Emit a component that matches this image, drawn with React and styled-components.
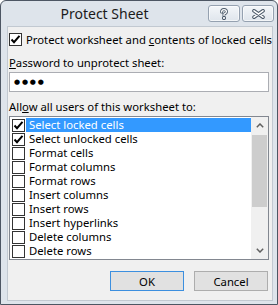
import React from 'react';
import styled, { createGlobalStyle } from 'styled-components';

const uiFont = '"Noto Sans", "Open Sans", sans-serif';

const GlobalStyle = createGlobalStyle`
  html, body {
    margin: 0;
    padding: 0;
    background: #ffffff;
  }
  * {
    box-sizing: border-box;
  }
`;

const Window = styled.div`
  width: 278px;
  height: 305px;
  display: flex;
  flex-direction: column;
  border: 1px solid #4d5663;
  border-radius: 6px 6px 0 0;
  background: #dee4eb;
  font-family: ${uiFont};
  font-size: 11.3px;
  color: #000000;
  overflow: hidden;
`;

const TitleBar = styled.div`
  height: 25px;
  display: flex;
  align-items: flex-start;
  flex-shrink: 0;
`;

const Title = styled.div`
  flex: 1;
  text-align: center;
  font-size: 14px;
  line-height: 18px;
  padding-top: 4px;
  color: #1b1b1b;
`;

const CaptionButtons = styled.div`
  display: flex;
  gap: 2px;
  margin-top: 4px;
  margin-right: 3px;
`;

const CaptionButton = styled.div`
  width: 32px;
  height: 17px;
  display: flex;
  align-items: center;
  justify-content: center;
  border: 1px solid #95a1b0;
  border-radius: 3px;
  background: linear-gradient(#f3f6f9, #dfe5ec);
  box-shadow: inset 0 0 0 1px rgba(255, 255, 255, 0.6);
`;

const Client = styled.div`
  flex: 1;
  margin: 0 4px 3px 6px;
  border: 1px solid #c2c9d1;
  background: #f0f0f0;
  display: flex;
  flex-direction: column;
`;

const CheckRow = styled.label`
  display: flex;
  align-items: center;
  gap: 4px;
  margin: 6px 0 0 1px;
  height: 13px;
  line-height: 15px;
  white-space: nowrap;
`;

const Box = styled.span`
  width: 13px;
  height: 13px;
  flex-shrink: 0;
  display: flex;
  align-items: center;
  justify-content: center;
  border: 1px solid #333333;
  background: #ffffff;
`;

const FieldLabel = styled.div`
  line-height: 15px;
  margin: ${props => props.$top}px 0 0 1px;
  white-space: nowrap;
`;

const PasswordBox = styled.div`
  width: 260px;
  height: 20px;
  margin: 2px 0 0 1px;
  border: 1px solid #abadb3;
  background: #ffffff;
  display: flex;
  align-items: center;
  padding-left: 4px;
  font-family: "DejaVu Sans", sans-serif;
  font-size: 7px;
  letter-spacing: 1.8px;
`;

const ListBox = styled.div`
  width: 260px;
  height: 144px;
  margin: 2px 0 0 1px;
  border: 1px solid #828790;
  background: #ffffff;
  display: flex;
  padding: 1px 0;
`;

const Rows = styled.div`
  flex: 1;
  display: flex;
  flex-direction: column;
`;

const Row = styled.div`
  height: 14px;
  display: flex;
  align-items: flex-start;
  padding-left: 2px;
`;

const RowBox = styled(Box)`
  margin-top: 1px;
`;

const RowText = styled.span`
  flex: 1;
  height: 14px;
  margin-left: 1px;
  padding-left: 3px;
  line-height: 14px;
  white-space: nowrap;
  overflow: hidden;
  background: ${props => (props.$selected ? '#3399ff' : 'transparent')};
  color: ${props => (props.$selected ? '#ffffff' : '#000000')};
`;

const ScrollBar = styled.div`
  width: 17px;
  margin-top: -1px;
  margin-bottom: -1px;
  background: #f0f0f0;
  display: flex;
  flex-direction: column;
`;

const ScrollArrow = styled.div`
  height: 17px;
  display: flex;
  align-items: center;
  justify-content: center;
`;

const ScrollTrack = styled.div`
  flex: 1;
  padding: 0 1px;
`;

const ScrollThumb = styled.div`
  height: 72px;
  margin-top: 1px;
  background: #cdcdcd;
`;

const ButtonRow = styled.div`
  display: flex;
  justify-content: flex-end;
  gap: 10px;
  margin: 11px 4px 0 0;
`;

const DialogButton = styled.div`
  width: 74px;
  height: 20px;
  display: flex;
  align-items: center;
  justify-content: center;
  border: 1px solid ${props => (props.$default ? '#3c8fdf' : '#adadad')};
  background: #e1e1e1;
  line-height: 15px;
`;

const Check = () => (
  <svg width="11" height="11" viewBox="0 0 11 11">
    <polyline points="1.5,5.5 4,8.2 9.5,1.8" fill="none" stroke="#000000" strokeWidth="2" />
  </svg>
);

const HelpGlyph = () => (
  <svg width="10" height="12" viewBox="0 0 10 12">
    <g fill="none" strokeLinecap="round">
      <path d="M2.6 4 Q2.6 1.6 5 1.6 Q7.4 1.6 7.4 3.8 Q7.4 5.3 5 6.2 L5 7.4" stroke="#4a5868" strokeWidth="3" />
      <circle cx="5" cy="10" r="0.6" stroke="#4a5868" strokeWidth="3" />
      <path d="M2.6 4 Q2.6 1.6 5 1.6 Q7.4 1.6 7.4 3.8 Q7.4 5.3 5 6.2 L5 7.4" stroke="#ffffff" strokeWidth="1.3" />
      <circle cx="5" cy="10" r="0.3" stroke="#ffffff" strokeWidth="1.2" />
    </g>
  </svg>
);

const CloseGlyph = () => (
  <svg width="13" height="10" viewBox="0 0 13 10">
    <g fill="none" strokeLinecap="round">
      <path d="M2 1.8 L11 8.2 M11 1.8 L2 8.2" stroke="#4a5868" strokeWidth="3.6" />
      <path d="M2 1.8 L11 8.2 M11 1.8 L2 8.2" stroke="#ffffff" strokeWidth="1.6" />
    </g>
  </svg>
);

const Chevron = ({ up }) => (
  <svg width="8" height="5" viewBox="0 0 8 5">
    <polyline
      points={up ? '0.8,4.2 4,1 7.2,4.2' : '0.8,0.8 4,4 7.2,0.8'}
      fill="none"
      stroke="#606060"
      strokeWidth="1.5"
    />
  </svg>
);

const permissions = [
  { label: 'Select locked cells', checked: true, selected: true },
  { label: 'Select unlocked cells', checked: true },
  { label: 'Format cells' },
  { label: 'Format columns' },
  { label: 'Format rows' },
  { label: 'Insert columns' },
  { label: 'Insert rows' },
  { label: 'Insert hyperlinks' },
  { label: 'Delete columns' },
  { label: 'Delete rows' },
];

const App = () => (
  <>
    <GlobalStyle />
    <Window>
      <TitleBar>
        <Title>Protect Sheet</Title>
        <CaptionButtons>
          <CaptionButton><HelpGlyph /></CaptionButton>
          <CaptionButton><CloseGlyph /></CaptionButton>
        </CaptionButtons>
      </TitleBar>
      <Client>
        <CheckRow>
          <Box><Check /></Box>
          <span>Protect worksheet and <u>c</u>ontents of locked cells</span>
        </CheckRow>
        <FieldLabel $top={9}><u>P</u>assword to unprotect sheet:</FieldLabel>
        <PasswordBox>●●●●</PasswordBox>
        <FieldLabel $top={7}>All<u>o</u>w all users of this worksheet to:</FieldLabel>
        <ListBox>
          <Rows>
            {permissions.map(item => (
              <Row key={item.label}>
                <RowBox>{item.checked && <Check />}</RowBox>
                <RowText $selected={item.selected}>{item.label}</RowText>
              </Row>
            ))}
          </Rows>
          <ScrollBar>
            <ScrollArrow><Chevron up /></ScrollArrow>
            <ScrollTrack><ScrollThumb /></ScrollTrack>
            <ScrollArrow><Chevron /></ScrollArrow>
          </ScrollBar>
        </ListBox>
        <ButtonRow>
          <DialogButton $default>OK</DialogButton>
          <DialogButton>Cancel</DialogButton>
        </ButtonRow>
      </Client>
    </Window>
  </>
);

export default App;
